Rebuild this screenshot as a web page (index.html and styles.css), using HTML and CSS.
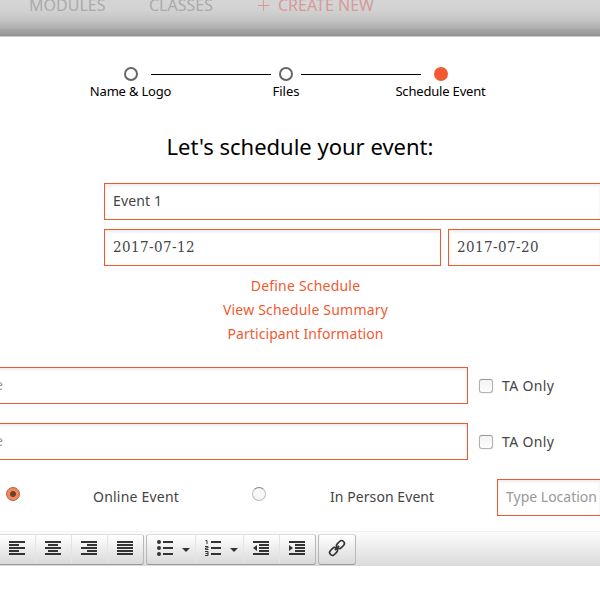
FILE: index.html
```html
<!DOCTYPE html>
<html lang="en">
<head>
<meta charset="utf-8">
<title>Schedule Event</title>
<link rel="stylesheet" href="styles.css">
</head>
<body>
<nav class="topbar"><span class="modules">MODULES</span><span class="classes">CLASSES</span><span class="create"><svg width="11" height="11"><path d="M5.5 0v11M0 5.5h11" stroke="currentColor"/></svg><span>CREATE NEW</span></span></nav>
<main>
  <div class="steps">
    <div class="step"><i class="dot"></i><span class="s1">Name &amp; Logo</span></div>
    <i class="line"></i>
    <div class="step"><i class="dot"></i><span class="s2">Files</span></div>
    <i class="line early"></i>
    <div class="step"><i class="dot active"></i><span class="s3">Schedule Event</span></div>
  </div>
  <h1><span>Let's schedule your event:</span></h1>
  <div class="field name"><span>Event 1</span></div>
  <div class="dates"><div class="field date"><span>2017-07-12</span></div><div class="field date"><span>2017-07-20</span></div></div>
  <div class="links"><a class="l1">Define Schedule</a><a class="l2">View Schedule Summary</a><a class="l3">Participant Information</a></div>
  <div class="row"><div class="field wide"><span>e</span></div><i class="check"></i><span class="ta">TA Only</span></div>
  <div class="row"><div class="field wide"><span>e</span></div><i class="check"></i><span class="ta">TA Only</span></div>
  <div class="options"><i class="radio on"></i><span class="online">Online Event</span><i class="radio"></i><span class="person">In Person Event</span><div class="field location"><span>Type Location</span></div></div>
  <div class="toolbar">
    <div class="group first">
      <b class="btn b-left"><svg width="16" height="14"><path d="M0 0h16v2H0zM0 3h10v2H0zM0 6h16v2H0zM0 9h10v2H0zM0 12h16v2H0z"/></svg></b>
      <b class="btn"><svg width="16" height="14"><path d="M0 0h16v2H0zM3 3h10v2H3zM0 6h16v2H0zM3 9h10v2H3zM0 12h16v2H0z"/></svg></b>
      <b class="btn"><svg width="16" height="14"><path d="M0 0h16v2H0zM6 3h10v2H6zM0 6h16v2H0zM6 9h10v2H6zM0 12h16v2H0z"/></svg></b>
      <b class="btn"><svg width="16" height="14"><path d="M0 0h16v2H0zM0 3h16v2H0zM0 6h16v2H0zM0 9h16v2H0zM0 12h16v2H0z"/></svg></b>
    </div>
    <div class="group second">
      <b class="btn split"><svg width="16" height="16"><path d="M6 1h10v2H6zM6 7h10v2H6zM6 13h10v2H6z"/><circle cx="2" cy="2" r="2"/><circle cx="2" cy="8" r="2"/><circle cx="2" cy="14" r="2"/></svg><svg width="8" height="4"><path d="M0 0h8L4 4z"/></svg></b>
      <b class="btn split"><svg width="16" height="16"><path d="M6 1h10v2H6zM6 7h10v2H6zM6 13h10v2H6z"/><path d="M.5 .5h1.500V4M0 6.500h3v1.500h-2.500v1.500h3M0 11.500h3v4H0M.5 13.500h2.500" fill="none" stroke="#333"/></svg><svg width="8" height="4"><path d="M0 0h8L4 4z"/></svg></b>
      <b class="btn"><svg width="16" height="14"><path d="M0 0h16v2H0zM6 3h10v2H6zM6 6h10v2H6zM6 9h10v2H6zM0 12h16v2H0zM4 4v6L0 7z"/></svg></b>
      <b class="btn"><svg width="16" height="14"><path d="M0 0h16v2H0zM6 3h10v2H6zM6 6h10v2H6zM6 9h10v2H6zM0 12h16v2H0zM0 4v6l4-3z"/></svg></b>
    </div>
    <div class="group third"><b class="btn"><svg width="16" height="16" viewBox="0 0 16 16"><g transform="rotate(-45 8 8)" fill="none" stroke="#333" stroke-width="1.600"><rect x="-1.200" y="5.200" width="8.600" height="5.600" rx="2.800"/><rect x="8.600" y="5.200" width="8.600" height="5.600" rx="2.800"/><path d="M5 8h6"/></g></svg></b></div>
  </div>
</main>
</body>
</html>
```
FILE: styles.css
```css
* { box-sizing: border-box; }
html, body { margin: 0; height: 599px; overflow: hidden; background: #fff; }
body { font: 14px/20px "Noto Sans", sans-serif; color: #444; white-space: nowrap; }
svg { display: block; flex: none; overflow: visible; }
i, b { font-style: normal; font-weight: normal; flex: none; }
span { flex: none; }

.topbar { height: 37px; display: flex; align-items: flex-start; padding-left: 29px; background: linear-gradient(#d5d5d5, #d2d2d2 10px, #c5c5c5 20px, #acacac 29px, #9f9f9f 30px, #a4a4a4 31px, #929292 36px, #ccc 36px); color: #aaa; font-size: 16px; line-height: 20px; }
.topbar > span { margin-top: -5px; }
.modules { width: 120px; }
.classes { width: 109px; }
.create { display: flex; align-items: center; gap: 9px; color: #d69a9a; }

.steps { display: flex; padding: 30px 0 0 111px; height: 68px; }
.step { width: 40px; display: flex; flex-direction: column; align-items: center; color: #000; font-size: 13px; line-height: 18px; }
.dot { width: 14px; height: 14px; border: 2px solid #666; border-radius: 50%; margin-bottom: 1px; }
.dot.active { background: #f15a31; border-color: #f15a31; }
.line { width: 120px; height: 1px; margin: 7px -5px 0 0; background: #000; }
.line.early { margin-left: -5px; margin-right: 0; }
.s1 { letter-spacing: -.2px; margin-left: -1px; }
.s3 { letter-spacing: -.18px; margin-left: -1px; }

h1 { margin: 23px 0 0; height: 37px; font-size: 22px; line-height: 36px; font-weight: normal; color: #000; text-align: center; }
.field { height: 37px; border: 1px solid #f15a31; padding: 7px 8px; box-shadow: inset 0 2px 3px rgba(0, 0, 0, .08); background: #fff; flex: none; }
.name { width: 496px; margin: 18px 0 0 104px; border-right: 0; letter-spacing: .15px; }
.dates { display: flex; gap: 7px; margin: 9px 0 0 104px; }
.date { width: 337px; font: 15px/20px "DejaVu Serif Condensed", "DejaVu Serif", serif; font-stretch: condensed; letter-spacing: .42px; }
.date + .date { width: 152px; border-right: 0; }
.links { display: flex; flex-direction: column; align-items: center; margin: 8px 0 21px 11px; width: 589px; line-height: 24px; color: #f15a31; }
.links a { margin-right: 0; }
.l1, .l2 { letter-spacing: .2px; }
.l3 { letter-spacing: .09px; }
.row { display: flex; align-items: center; height: 37px; margin-bottom: 19px; }
.wide { width: 478px; margin-left: -10px; padding-left: 4px; color: #999; }
.check { width: 14px; height: 14px; margin: 1px 9px 0 11px; border: 1px solid #b5b2ae; border-top-color: #999; border-radius: 3px; background: linear-gradient(#f3f3f3, #fcfcfc); box-shadow: 0 0 1px #aaa; }
.ta { letter-spacing: .35px; }
.options { display: flex; height: 37px; align-items: center; padding-left: 6px; }
.radio { width: 14px; height: 14px; margin-top: -7px; border: 1px solid #bbb; border-top-color: #888; border-radius: 50%; background: #f7f7f7; }
.radio.on { border-color: #b95d3d; background: radial-gradient(#70402c 0 2.5px, #f1895f 3.5px); }
.online { width: 159px; margin: -2px 0 0 73px; letter-spacing: .22px; }
.person { width: 167px; margin: -2px 0 0 64px; letter-spacing: .07px; }
.location { width: 103px; border-right: 0; color: #999; }

.toolbar { display: flex; height: 35px; margin-top: 15px; padding-top: 3px; background: linear-gradient(#f2f2f2 1px, #fcfcfc 1px, #dadada); }
.group { display: flex; height: 31px; border: 1px solid #b8b8b8; border-top-color: #ddd; border-bottom-color: #999; border-radius: 3px; background: linear-gradient(#fff, #d9d9d9); overflow: hidden; }
.first { width: 149px; margin-left: -5px; }
.second { width: 170px; margin-left: 2px; }
.third { width: 38px; margin-left: 2px; }
.btn { width: 36px; display: flex; justify-content: center; align-items: center; padding: 0 1px 3px 0; border-left: 1px solid #e4e4e4; fill: #333; }
.btn:first-child { border-left: 0; }
.first .btn { padding-right: 2px; }
.first .b-left { width: 39px; padding: 0 0 3px 3px; }
.split { width: 48px; gap: 9px; padding: 0 0 3px 3px; }
.split svg + svg { margin-top: 3px; }
.split:first-child { padding-left: 4px; }
.third .btn { padding: 0 0 3px; }
```
